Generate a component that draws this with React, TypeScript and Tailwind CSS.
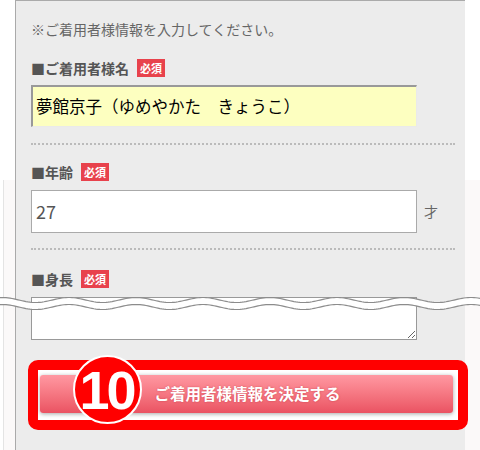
import React from 'react';

const jp = { fontFamily: '"Noto Sans CJK JP", "Noto Sans", sans-serif' };

function wave(y: number, amp: number, period: number, phase: number) {
  const pts: string[] = [];
  for (let x = 0; x <= 480; x += 2) {
    pts.push(`${x},${(y - amp * Math.cos(((x - phase) / period) * Math.PI * 2)).toFixed(2)}`);
  }
  return pts.join(' ');
}

function Required() {
  return (
    <span className="ml-[8px] inline-flex h-[18px] w-[28px] items-center justify-center bg-[#e8424c] text-[11px] font-bold leading-none text-white">
      必須
    </span>
  );
}

function Label({ text, mt }: { text: string; mt: string }) {
  return (
    <div className={`flex h-[18px] items-center ${mt}`}>
      <span className="text-[14px] font-bold leading-none text-[#555]">■{text}</span>
      <Required />
    </div>
  );
}

export default function App() {
  const top = wave(300, 2.5, 67, 203);
  const bottom = wave(307, 2.5, 67, 203);
  const fill = top + ' ' + bottom.split(' ').reverse().join(' ');

  return (
    <div className="relative h-[450px] w-[480px] overflow-hidden bg-white" style={jp}>
      {/* back page */}
      <div className="absolute bottom-0 left-[3px] right-0 top-[180px] border-l border-[#e4e4e4] bg-[#fbf9f9]" />

      <div className="relative ml-[15px] h-[450px] w-[450px] border-l border-t border-[#aaa] bg-[#ececec] pl-[15px]">
        <p className="pt-[19px] text-[14px] leading-[18px] text-[#666]">※ご着用者様情報を入力してください。</p>

        <Label text="ご着用者様名" mt="mt-[21px]" />
        <div className="mt-[8px] flex h-[42px] w-[386px] items-center border-b border-l-2 border-r border-t-2 border-b-[#eaeaea] border-l-[#999] border-r-[#eaeaea] border-t-[#999] bg-[#fdffc0] pl-[3px] text-[16.5px] text-black">
          夢館京子（ゆめやかた　きょうこ）
        </div>

        <div className="mt-[16px] w-[424px] border-t-2 border-dotted border-[#bbb]" />

        <Label text="年齢" mt="mt-[18px]" />
        <div className="mt-[9px] flex items-center">
          <div className="flex h-[43px] w-[386px] items-center border border-[#aaa] bg-white pl-[4px] text-[18px] text-[#555]">
            27
          </div>
          <span className="ml-[7px] text-[14px] text-[#666]">才</span>
        </div>

        <div className="mt-[15px] w-[424px] border-t-2 border-dotted border-[#bbb]" />

        <Label text="身長" mt="mt-[20px]" />
        <textarea
          readOnly
          className="mt-[9px] block h-[43px] w-[386px] border border-[#999] bg-white outline-none"
        />

        {/* annotated submit button */}
        <div className="relative ml-[-3px] mt-[20px] h-[70px] w-[440px] rounded-[10px] border-[10px] border-[#ff0000] bg-white">
          <div className="ml-[2px] mt-[5px] flex h-[38px] w-[413px] items-center justify-center rounded-[3px] bg-gradient-to-b from-[#ff98a2] to-[#ea5262] shadow-[0_1px_4px_rgba(0,0,0,0.35)]">
            <span className="pl-[2px] text-[15.5px] font-bold text-white [text-shadow:0_0_2px_rgba(150,0,20,0.4)]">
              ご着用者様情報を決定する
            </span>
          </div>
          <div
            className="absolute left-[35px] top-[-15px] flex h-[69px] w-[69px] items-center justify-center rounded-full border-2 border-white bg-[#ff0000] text-[54px] font-bold tracking-[-3px] text-white"
            style={{ fontFamily: '"Liberation Sans", Arial, sans-serif' }}
          >
            <span className="-ml-[2px] leading-none">10</span>
          </div>
        </div>
      </div>

      {/* omission wave */}
      <svg className="pointer-events-none absolute left-0 top-0" width="480" height="450">
        <polygon points={fill} fill="#ffffff" />
        <polyline points={top} fill="none" stroke="#8c8c8c" strokeWidth="1.2" />
        <polyline points={bottom} fill="none" stroke="#8c8c8c" strokeWidth="1.2" />
      </svg>
    </div>
  );
}
